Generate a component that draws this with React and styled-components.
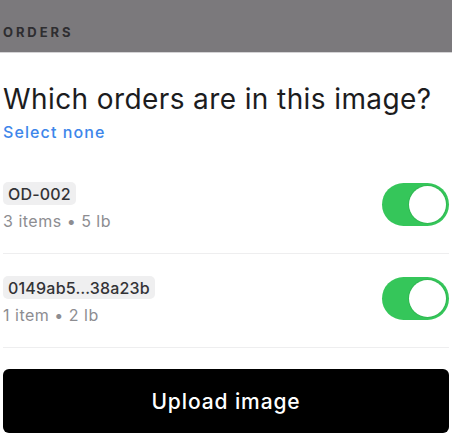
import React, { useState } from "react";
import styled, { createGlobalStyle } from "styled-components";

const GlobalStyle = createGlobalStyle`
  * { box-sizing: border-box; }
  body {
    margin: 0;
    background: #fff;
    font-family: Inter, "Open Sans", sans-serif;
  }
`;

const Page = styled.div`
  width: 452px;
  height: 434px;
  overflow: hidden;
  display: flex;
  flex-direction: column;
`;

const Header = styled.div`
  height: 53px;
  background: #7b797c;
  border-bottom: 1px solid #d4d3d5;
  display: flex;
  align-items: center;
  padding: 11px 3px 0;
`;

const HeaderTitle = styled.span`
  font-size: 13px;
  font-weight: 700;
  letter-spacing: 2.9px;
  color: #2e2d30;
`;

const Body = styled.div`
  padding: 0 3px;
  display: flex;
  flex-direction: column;
`;

const Question = styled.h1`
  margin: 29px 0 0;
  font-size: 28px;
  font-weight: 400;
  letter-spacing: 0.4px;
  line-height: 34px;
  color: #1c1c1e;
`;

const SelectLink = styled.button`
  align-self: flex-start;
  margin: 6px 0 0;
  padding: 0;
  border: none;
  background: none;
  font: inherit;
  font-size: 16px;
  font-weight: 500;
  letter-spacing: 1.1px;
  color: #3d86ea;
  cursor: pointer;
`;

const List = styled.div`
  margin-top: 18px;
  display: flex;
  flex-direction: column;
`;

const Row = styled.div`
  height: 94px;
  display: flex;
  align-items: center;
  justify-content: space-between;
  border-bottom: 1px solid #eeeeef;
`;

const Info = styled.div`
  display: flex;
  flex-direction: column;
  align-items: flex-start;
  gap: 6px;
`;

const OrderId = styled.span`
  height: 23px;
  display: inline-flex;
  align-items: center;
  padding: 0 5px;
  background: #efeff0;
  border-radius: 5px;
  font-size: 16px;
  font-weight: 500;
  letter-spacing: 0.2px;
  color: #333336;
`;

const Meta = styled.span`
  font-size: 16px;
  letter-spacing: 0.5px;
  color: #8d8d91;
`;

const Track = styled.button`
  width: 67px;
  height: 43px;
  margin-top: -4px;
  padding: 3px;
  border: none;
  border-radius: 22px;
  background: ${(p) => (p.on ? "#35c65a" : "#e5e5ea")};
  display: flex;
  justify-content: ${(p) => (p.on ? "flex-end" : "flex-start")};
  cursor: pointer;
`;

const Knob = styled.span`
  width: 37px;
  height: 37px;
  border-radius: 50%;
  background: #fff;
  box-shadow: 0 0 0 1px rgba(40, 160, 70, 0.35);
`;

const UploadButton = styled.button`
  margin-top: 21px;
  height: 64px;
  border: none;
  border-radius: 6px;
  background: #000;
  color: #fff;
  font: inherit;
  font-size: 21px;
  font-weight: 500;
  letter-spacing: 0.9px;
  cursor: pointer;
`;

const orders = [
  { id: "OD-002", meta: "3 items • 5 lb" },
  { id: "0149ab5…38a23b", meta: "1 item • 2 lb" },
];

const App = () => {
  const [selected, setSelected] = useState([true, true]);
  const toggle = (i) =>
    setSelected((s) => s.map((v, j) => (j === i ? !v : v)));

  return (
    <Page>
      <GlobalStyle />
      <Header>
        <HeaderTitle>ORDERS</HeaderTitle>
      </Header>
      <Body>
        <Question>Which orders are in this image?</Question>
        <SelectLink onClick={() => setSelected([false, false])}>
          Select none
        </SelectLink>
        <List>
          {orders.map((order, i) => (
            <Row key={order.id}>
              <Info>
                <OrderId>{order.id}</OrderId>
                <Meta>{order.meta}</Meta>
              </Info>
              <Track on={selected[i]} onClick={() => toggle(i)}>
                <Knob />
              </Track>
            </Row>
          ))}
        </List>
        <UploadButton>Upload image</UploadButton>
      </Body>
    </Page>
  );
};

export default App;
